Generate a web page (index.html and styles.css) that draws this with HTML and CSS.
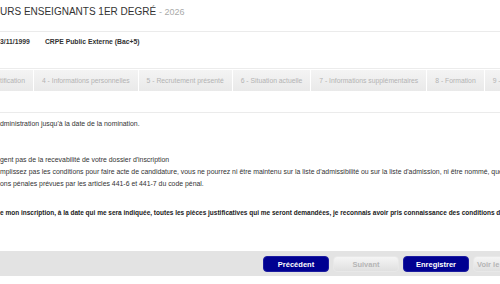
FILE: index.html
```html
<!DOCTYPE html>
<html lang="fr">
<head>
  <meta charset="UTF-8" />
  <title>Inscription - Concours enseignants 1er degré</title>
  <link rel="stylesheet" href="styles.css">
</head>
<body>
  <div class="page">
    <h1 class="title">URS ENSEIGNANTS 1ER DEGRÉ <span class="year">- 2026</span></h1>

    <div class="candidate">
      <span>3/11/1999</span>
      <span>CRPE Public Externe (Bac+5)</span>
    </div>

    <nav class="steps">
      <span class="step">tification</span>
      <span class="step">4 - Informations personnelles</span>
      <span class="step">5 - Recrutement présenté</span>
      <span class="step">6 - Situation actuelle</span>
      <span class="step">7 - Informations supplémentaires</span>
      <span class="step">8 - Formation</span>
      <span class="step">9 - Récapitulatif</span>
    </nav>

    <div class="content">
      <p>dministration jusqu'à la date de la nomination.</p>
      <p class="warning">
        gent pas de la recevabilité de votre dossier d'inscription<br>
        mplissez pas les conditions pour faire acte de candidature, vous ne pourrez ni être maintenu sur la liste d'admissibilité ou sur la liste d'admission, ni être nommé, quelle que soit la date<br>
        ons pénales prévues par les articles 441-6 et 441-7 du code pénal.
      </p>
      <p class="engage">e mon inscription, à la date qui me sera indiquée, toutes les pièces justificatives qui me seront demandées, je reconnais avoir pris connaissance des conditions d'inscription</p>
    </div>

    <div class="actions">
      <button class="btn btn-main">Précédent</button>
      <button class="btn btn-off">Suivant</button>
      <button class="btn btn-main">Enregistrer</button>
      <button class="btn btn-off">Voir le récapitulatif</button>
    </div>
  </div>
</body>
</html>
```

FILE: styles.css
```css
body {
  margin: 0;
  background: #fff;
  font-family: "Liberation Sans", Arial, sans-serif;
  color: #333;
  overflow: hidden;
}

.page {
  width: 500px;
  white-space: nowrap;
}

.title {
  margin: 0;
  padding: 5px 0 12px;
  font-size: 10px;
  line-height: 14px;
  font-weight: normal;
  color: #333;
  border-bottom: 1px solid #ebebeb;
}

.year {
  font-size: 9px;
  color: #aaa;
}

.candidate {
  display: flex;
  gap: 15px;
  padding: 5px 0;
  font-size: 6.8px;
  line-height: 10px;
  font-weight: bold;
  color: #333;
}

.steps {
  display: flex;
  gap: 1px;
  margin-top: 16px;
  padding-top: 1px;
  border-top: 1px solid #ececec;
}

.step {
  flex: none;
  padding: 0 8px;
  height: 21px;
  line-height: 21px;
  font-size: 6.8px;
  color: #b3b3b3;
  background: linear-gradient(#f4f4f4, #e9e9e9);
}

.step:first-child {
  padding-left: 0;
}

.content {
  margin-top: 21px;
  padding-top: 5px;
  border-top: 1px solid #ebebeb;
  font-size: 6.9px;
  line-height: 12px;
  color: #333;
}

.content p {
  margin: 0;
}

.content .warning {
  margin-top: 24px;
}

.content .engage {
  margin-top: 17px;
  font-size: 6.5px;
  font-weight: bold;
  color: #1a1a1a;
}

.actions {
  display: flex;
  gap: 4px;
  margin-top: 32px;
  padding: 5px 0 4px 263px;
  background: #e3e3e3;
}

.btn {
  flex: none;
  width: 66px;
  height: 16px;
  padding: 0;
  border-radius: 4px;
  font-family: "Liberation Sans", Arial, sans-serif;
  font-size: 7.5px;
  font-weight: bold;
}

.btn-main {
  background: #000091;
  border: 1px solid #1c1ca0;
  color: #fff;
}

.btn-off {
  background: linear-gradient(#f5f5f5, #e0e0e0);
  border: 1px solid #e8e8e8;
  color: #b5b5b5;
}

.btn-off:last-child {
  width: 90px;
  text-align: left;
  padding-left: 3px;
}
```
